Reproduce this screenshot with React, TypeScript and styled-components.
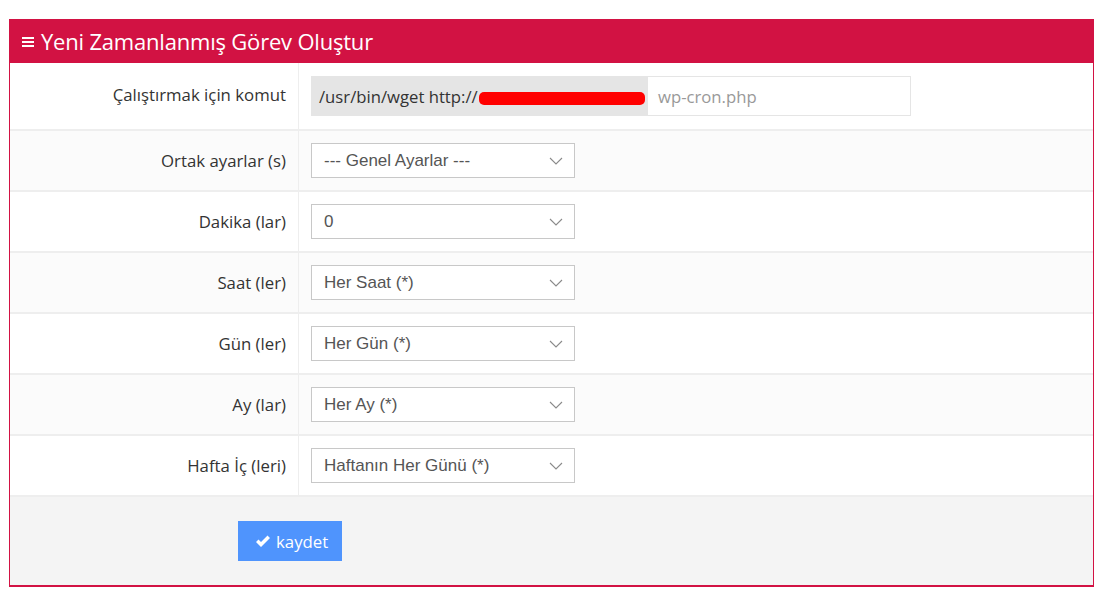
import React from "react";
import styled, { createGlobalStyle } from "styled-components";

const GlobalStyle = createGlobalStyle`
  body {
    margin: 0;
    background: #fff;
    font-family: "Open Sans", "Liberation Sans", sans-serif;
  }
`;

const Page = styled.div`
  padding: 19px 13px 0 9px;
`;

const Panel = styled.div`
  border: 1px solid #d21243;
  border-top: none;
  border-bottom: 2px solid #d21243;
`;

const Header = styled.div`
  display: flex;
  align-items: center;
  gap: 7px;
  height: 44px;
  padding: 0 12px 0 13px;
  margin: 0 -1px;
  background: #d21243;
  color: #fff;
  font-size: 22px;
  letter-spacing: -0.2px;
`;

const Row = styled.div<{ $alt?: boolean; $tall?: boolean }>`
  display: grid;
  grid-template-columns: 289px 1fr;
  background: ${(p) => (p.$alt ? "#fbfbfb" : "#fff")};
  border-bottom: 2px solid #eeeeee;
  height: ${(p) => (p.$tall ? 66 : 59)}px;
`;

const Label = styled.div<{ $top?: boolean }>`
  display: flex;
  align-items: ${(p) => (p.$top ? "flex-start" : "center")};
  padding-top: ${(p) => (p.$top ? 20 : 0)}px;
  justify-content: flex-end;
  padding-right: 12px;
  border-right: 1px solid #eeeeee;
  font-size: 16.8px;
  color: #333;
`;

const Field = styled.div`
  display: flex;
  align-items: center;
  padding-left: 12px;
`;

const InputGroup = styled.div`
  display: flex;
  height: 40px;
`;

const Addon = styled.div`
  display: flex;
  align-items: center;
  width: 329px;
  padding-left: 8px;
  background: #e5e5e5;
  font-size: 16.7px;
  color: #333;
  white-space: nowrap;
`;

const Redacted = styled.span`
  display: inline-block;
  width: 166px;
  height: 13px;
  margin-left: 1px;
  margin-top: 4px;
  background: #ff0000;
  border-radius: 5px;
`;

const TextInput = styled.div`
  display: flex;
  align-items: center;
  width: 252px;
  padding-left: 10px;
  border: 1px solid #e5e5e5;
  border-left: none;
  font-size: 16.7px;
  color: #999;
`;

const Select = styled.div`
  display: flex;
  align-items: center;
  justify-content: space-between;
  box-sizing: border-box;
  width: 264px;
  height: 35px;
  padding: 0 11px 0 12px;
  border: 1px solid #c8c8c8;
  background: #fff;
  font-family: "Liberation Sans", Arial, sans-serif;
  font-size: 17px;
  color: #555;
`;

const Footer = styled.div`
  background: #f4f4f4;
  padding: 24px 0 24px 228px;
`;

const SaveButton = styled.button`
  display: flex;
  align-items: center;
  gap: 5px;
  height: 40px;
  padding: 0 14px 0 17px;
  border: none;
  background: #4f94fd;
  color: #fff;
  font-family: "Open Sans", "Liberation Sans", sans-serif;
  font-size: 16.8px;
`;

const Chevron = () => (
  <svg width="14" height="8" viewBox="0 0 14 8" fill="none">
    <path d="M1 1l6 6 6-6" stroke="#8a8a8a" strokeWidth="1.1" />
  </svg>
);

const rows = [
  { label: "Ortak ayarlar (s)", value: "--- Genel Ayarlar ---" },
  { label: "Dakika (lar)", value: "0" },
  { label: "Saat (ler)", value: "Her Saat (*)" },
  { label: "Gün (ler)", value: "Her Gün (*)" },
  { label: "Ay (lar)", value: "Her Ay (*)" },
  { label: "Hafta İç (leri)", value: "Haftanın Her Günü (*)" },
];

export default function App() {
  return (
    <>
      <GlobalStyle />
      <Page>
        <Panel>
          <Header>
            <svg width="12" height="11" viewBox="0 0 12 11">
              <rect x="0" y="1" width="12" height="2" fill="#fff" />
              <rect x="0" y="5" width="12" height="2" fill="#fff" />
              <rect x="0" y="9" width="12" height="2" fill="#fff" />
            </svg>
            Yeni Zamanlanmış Görev Oluştur
          </Header>
          <Row $tall>
            <Label $top>Çalıştırmak için komut</Label>
            <Field>
              <InputGroup>
                <Addon>
                  /usr/bin/wget http://
                  <Redacted />
                </Addon>
                <TextInput>wp-cron.php</TextInput>
              </InputGroup>
            </Field>
          </Row>
          {rows.map((r, i) => (
            <Row key={r.label} $alt={i % 2 === 0}>
              <Label>{r.label}</Label>
              <Field>
                <Select>
                  {r.value}
                  <Chevron />
                </Select>
              </Field>
            </Row>
          ))}
          <Footer>
            <SaveButton>
              <svg width="16" height="13" viewBox="0 0 16 13">
                <path d="M1 7l2.5-2.5L6 7l6.5-6.5L15 3 6 12z" fill="#fff" />
              </svg>
              kaydet
            </SaveButton>
          </Footer>
        </Panel>
      </Page>
    </>
  );
}
